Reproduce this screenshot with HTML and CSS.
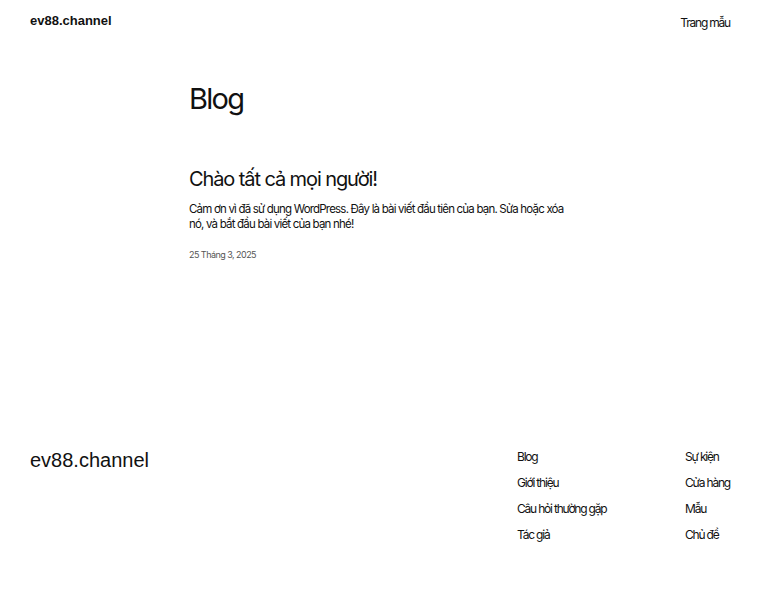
FILE: index.html
```html
<!DOCTYPE html>
<html lang="vi">
<head>
<meta charset="utf-8">
<title>Blog – ev88.channel</title>
<link rel="stylesheet" href="styles.css">
</head>
<body>
<header class="site-header">
  <a class="site-title" href="#">ev88.channel</a>
  <nav class="header-nav"><a href="#">Trang mẫu</a></nav>
</header>
<main class="main">
  <h1 class="page-title">Blog</h1>
  <article class="post">
    <h2 class="post-title">Chào tất cả mọi người!</h2>
    <p class="post-excerpt">Cảm ơn vì đã sử dụng WordPress. Đây là bài viết đầu tiên của bạn. Sửa hoặc xóa nó, và bắt đầu bài viết của bạn nhé!</p>
    <div class="post-date">25 Tháng 3, 2025</div>
  </article>
</main>
<footer class="site-footer">
  <a class="footer-title" href="#">ev88.channel</a>
  <div class="footer-nav">
    <ul class="footer-col">
      <li><a href="#">Blog</a></li>
      <li><a href="#">Giới thiệu</a></li>
      <li><a href="#">Câu hỏi thường gặp</a></li>
      <li><a href="#">Tác giả</a></li>
    </ul>
    <ul class="footer-col">
      <li><a href="#">Sự kiện</a></li>
      <li><a href="#">Cửa hàng</a></li>
      <li><a href="#">Mẫu</a></li>
      <li><a href="#">Chủ đề</a></li>
    </ul>
  </div>
</footer>
</body>
</html>
```
FILE: styles.css
```css
* { box-sizing: border-box; }
html, body { margin: 0; padding: 0; background: #fff; }
body {
  font-family: Inter, "Noto Sans", sans-serif;
  color: #111;
  letter-spacing: -0.075em;
}
a { color: inherit; text-decoration: none; }
.site-header {
  display: flex;
  justify-content: space-between;
  align-items: flex-start;
  padding: 11px 30px 0 30px;
  height: 42px;
}
.site-title {
  font-family: "Liberation Sans", Arial, sans-serif;
  font-weight: 700;
  font-size: 13px;
  line-height: 20px;
  letter-spacing: 0;
}
.header-nav a {
  font-size: 12px;
  line-height: 20px;
}
.main {
  padding: 39px 0 0 189px;
  height: 407px;
}
.page-title {
  margin: 0;
  font-size: 29px;
  font-weight: 400;
  line-height: 36px;
  letter-spacing: -0.06em;
}
.post { margin-top: 48px; width: 378px; }
.post-title {
  margin: 0;
  font-size: 20px;
  font-weight: 400;
  line-height: 28px;
  letter-spacing: -0.055em;
}
.post-excerpt {
  margin: 9px 0 0 0;
  font-size: 11.5px;
  line-height: 15px;
  letter-spacing: -0.07em;
}
.post-date {
  margin-top: 17px;
  font-size: 9px;
  line-height: 12px;
  color: #555;
  letter-spacing: -0.06em;
}
.site-footer {
  display: flex;
  justify-content: space-between;
  align-items: flex-start;
  padding: 0 30px;
}
.footer-title {
  font-family: "Liberation Sans", Arial, sans-serif;
  font-size: 20px;
  font-weight: 400;
  line-height: 22px;
  letter-spacing: 0;
}
.footer-nav { display: flex; }
.footer-col {
  list-style: none;
  margin: 0;
  padding: 0;
  display: flex;
  flex-direction: column;
  gap: 10px;
}
.footer-col:first-child { width: 168px; }
.footer-col li {
  font-size: 12px;
  line-height: 16px;
  white-space: nowrap;
}
```
